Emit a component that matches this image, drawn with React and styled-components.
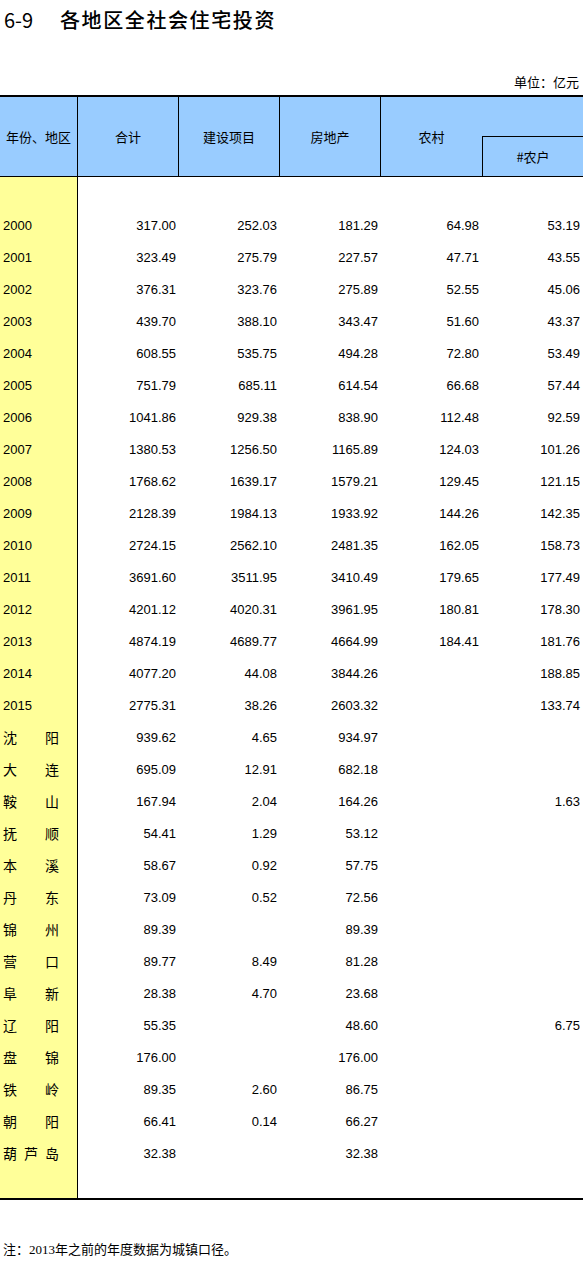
import React from "react";
import styled, { createGlobalStyle } from "styled-components";

const years = [
  ["2000", "317.00", "252.03", "181.29", "64.98", "53.19"],
  ["2001", "323.49", "275.79", "227.57", "47.71", "43.55"],
  ["2002", "376.31", "323.76", "275.89", "52.55", "45.06"],
  ["2003", "439.70", "388.10", "343.47", "51.60", "43.37"],
  ["2004", "608.55", "535.75", "494.28", "72.80", "53.49"],
  ["2005", "751.79", "685.11", "614.54", "66.68", "57.44"],
  ["2006", "1041.86", "929.38", "838.90", "112.48", "92.59"],
  ["2007", "1380.53", "1256.50", "1165.89", "124.03", "101.26"],
  ["2008", "1768.62", "1639.17", "1579.21", "129.45", "121.15"],
  ["2009", "2128.39", "1984.13", "1933.92", "144.26", "142.35"],
  ["2010", "2724.15", "2562.10", "2481.35", "162.05", "158.73"],
  ["2011", "3691.60", "3511.95", "3410.49", "179.65", "177.49"],
  ["2012", "4201.12", "4020.31", "3961.95", "180.81", "178.30"],
  ["2013", "4874.19", "4689.77", "4664.99", "184.41", "181.76"],
  ["2014", "4077.20", "44.08", "3844.26", "", "188.85"],
  ["2015", "2775.31", "38.26", "2603.32", "", "133.74"],
];

const cities = [
  ["沈\u3000\u3000阳", "939.62", "4.65", "934.97", "", ""],
  ["大\u3000\u3000连", "695.09", "12.91", "682.18", "", ""],
  ["鞍\u3000\u3000山", "167.94", "2.04", "164.26", "", "1.63"],
  ["抚\u3000\u3000顺", "54.41", "1.29", "53.12", "", ""],
  ["本\u3000\u3000溪", "58.67", "0.92", "57.75", "", ""],
  ["丹\u3000\u3000东", "73.09", "0.52", "72.56", "", ""],
  ["锦\u3000\u3000州", "89.39", "", "89.39", "", ""],
  ["营\u3000\u3000口", "89.77", "8.49", "81.28", "", ""],
  ["阜\u3000\u3000新", "28.38", "4.70", "23.68", "", ""],
  ["辽\u3000\u3000阳", "55.35", "", "48.60", "", "6.75"],
  ["盘\u3000\u3000锦", "176.00", "", "176.00", "", ""],
  ["铁\u3000\u3000岭", "89.35", "2.60", "86.75", "", ""],
  ["朝\u3000\u3000阳", "66.41", "0.14", "66.27", "", ""],
  ["葫\u2002芦\u2002岛", "32.38", "", "32.38", "", ""],
];

const cjk = `"Noto Sans CJK SC", "Liberation Sans", sans-serif`;

const GlobalStyle = createGlobalStyle`
  html, body {
    margin: 0;
    padding: 0;
    background: #fff;
    color: #000;
  }
`;

const Page = styled.div`
  width: 583px;
  font-family: ${cjk};
`;

const Title = styled.h1`
  margin: 0;
  height: 38px;
  display: flex;
  align-items: center;
  padding-left: 4px;
  font-size: 20px;
  font-weight: 500;
  font-family: ${cjk};
`;

const TitleCode = styled.span`
  width: 56px;
  font-weight: 400;
`;

const TitleName = styled.span`
  letter-spacing: 1.6px;
`;

const Unit = styled.div`
  margin-top: 36px;
  margin-bottom: 5px;
  height: 16px;
  line-height: 16px;
  text-align: right;
  padding-right: 4px;
  font-size: 13px;
`;

const Header = styled.div`
  display: grid;
  grid-template-columns: 78px 101px 101px 101px 101px 101px;
  grid-template-rows: 39px 40px;
  background: #99ccff;
  border-top: 2px solid #000;
  border-bottom: 1px solid #000;
  font-size: 13px;
`;

const HeadCell = styled.div`
  grid-row: span 2;
  display: flex;
  align-items: center;
  justify-content: center;
  border-right: ${(p) => (p.$last ? "none" : "1px solid #000")};
`;

const SubHead = styled.div`
  grid-column: 6;
  grid-row: 2;
  display: flex;
  align-items: center;
  justify-content: center;
  border-top: 1px solid #000;
  border-left: 1px solid #000;
`;

const Body = styled.div`
  border-bottom: 2px solid #000;
`;

const Row = styled.div`
  display: grid;
  grid-template-columns: 78px 101px 101px 101px 101px 101px;
  height: ${(p) => p.$h || 32}px;
`;

const Label = styled.div`
  background: #ffff99;
  border-right: 1px solid #000;
  display: flex;
  align-items: center;
  padding-left: 3px;
  white-space: pre;
  font-family: ${(p) => (p.$city ? cjk : `"Liberation Sans", Arial, sans-serif`)};
  font-size: ${(p) => (p.$city ? 14 : 13)}px;
`;

const Num = styled.div`
  display: flex;
  align-items: center;
  justify-content: flex-end;
  padding-right: 3px;
  font-family: "Liberation Sans", Arial, sans-serif;
  font-size: 13px;
`;

const Note = styled.p`
  margin: 41px 0 0;
  padding-left: 3px;
  font-size: 13px;
  line-height: 16px;
`;

const Serif = styled.span`
  font-family: "Liberation Serif", "Times New Roman", serif;
`;

const DataRow = ({ row, city }) => (
  <Row>
    <Label $city={city}>{row[0]}</Label>
    {row.slice(1).map((v, i) => (
      <Num key={i}>{v}</Num>
    ))}
  </Row>
);

const Spacer = ({ h }) => (
  <Row $h={h}>
    <Label />
  </Row>
);

export default function App() {
  return (
    <Page>
      <GlobalStyle />
      <Title>
        <TitleCode>6-9</TitleCode>
        <TitleName>各地区全社会住宅投资</TitleName>
      </Title>
      <Unit>单位：亿元</Unit>
      <Header>
        <HeadCell>年份、地区</HeadCell>
        <HeadCell>合计</HeadCell>
        <HeadCell>建设项目</HeadCell>
        <HeadCell>房地产</HeadCell>
        <HeadCell $last>农村</HeadCell>
        <SubHead>#农户</SubHead>
      </Header>
      <Body>
        <Spacer h={32} />
        {years.map((r) => (
          <DataRow key={r[0]} row={r} />
        ))}
        {cities.map((r) => (
          <DataRow key={r[0]} row={r} city />
        ))}
        <Spacer h={29} />
      </Body>
      <Note>
        注：<Serif>2013</Serif>年之前的年度数据为城镇口径。
      </Note>
    </Page>
  );
}
